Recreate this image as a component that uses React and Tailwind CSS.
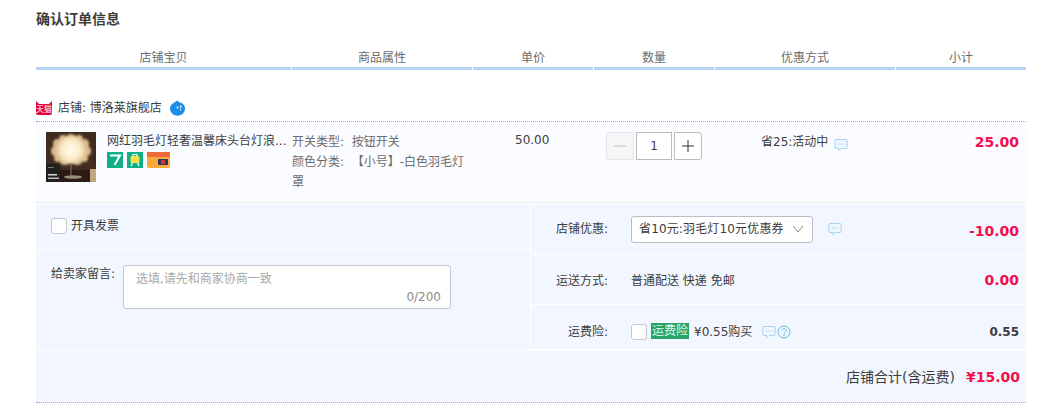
const COLS = [
  ["店铺宝贝", "w-[255px]"],
  ["商品属性", "w-[180px]"],
  ["单价", "w-[120px]"],
  ["数量", "w-[120px]"],
  ["优惠方式", "w-[180px]"],
  ["小计", "w-[130px]"],
];

function Bubble({ className = "" }) {
  return (
    <svg viewBox="0 0 14 14" className={`w-[14px] h-[14px] shrink-0 ${className}`} fill="none">
      <path d="M2 1.500h10a1.200 1.200 0 0 1 1.200 1.200v6.600a1.200 1.200 0 0 1-1.200 1.200H7l-2 2.200v-2.200H2a1.200 1.200 0 0 1-1.200-1.200V2.700a1.200 1.200 0 0 1 1.200-1.200z" stroke="#a9d3f0" strokeWidth="1" fill="#eef7fd" />
      <circle cx="4.500" cy="6" r=".6" fill="#8cc4ea" />
      <circle cx="7" cy="6" r=".6" fill="#8cc4ea" />
      <circle cx="9.500" cy="6" r=".6" fill="#8cc4ea" />
    </svg>
  );
}

function Check({ className = "" }) {
  return <span className={`block w-4 h-4 bg-white border border-[#c4c6cf] rounded-[3px] shrink-0 ${className}`} />;
}

const PETALS = [
  [25, 6, 5, 4], [17, 7, 4, 4], [33, 7, 4, 4], [11, 12, 4, 5], [39, 12, 4, 5],
  [9, 19, 4, 5], [41, 19, 4, 5], [12, 26, 4, 4], [38, 26, 4, 4], [19, 30, 5, 3], [31, 30, 5, 3],
];

function Thumb() {
  return (
    <svg viewBox="0 0 50 50" className="w-[50px] h-[50px] shrink-0">
      <defs>
        <radialGradient id="glow" cx="50%" cy="50%" r="50%">
          <stop offset="0%" stopColor="#fffdf0" />
          <stop offset="65%" stopColor="#fbeccb" />
          <stop offset="100%" stopColor="#e8cfa0" />
        </radialGradient>
        <filter id="soft" x="-20%" y="-20%" width="140%" height="140%">
          <feGaussianBlur stdDeviation="0.9" />
        </filter>
      </defs>
      <rect width="50" height="50" fill="#3f2b1f" />
      <rect x="0" y="38" width="50" height="12" fill="#2a1c14" />
      <rect x="44" y="37" width="6" height="13" fill="#c3a680" />
      <g filter="url(#soft)">
        {PETALS.map(([cx, cy, rx, ry]) => (
          <ellipse key={`${cx}-${cy}`} cx={cx} cy={cy} rx={rx} ry={ry} fill="#dcbd8e" />
        ))}
        <circle cx="25" cy="18" r="14" fill="url(#glow)" />
      </g>
      <rect x="24.500" y="31" width="1" height="13" fill="#8b7a66" />
      <ellipse cx="27" cy="45" rx="9" ry="1.800" fill="#9a8d7a" />
      <rect x="0" y="32" width="14" height="18" fill="#20201e" />
      <rect x="2" y="35" width="6" height="1" fill="#777" />
      <rect x="2" y="42" width="9" height="1.500" fill="#d8d8d8" />
      <rect x="2" y="45.500" width="11" height="1.500" fill="#bcbcbc" />
    </svg>
  );
}

function Row({ label, children, amount, dark, h, pad, amtPad }) {
  return (
    <div className={`flex items-center border-b border-white ${h} ${pad}`}>
      <div className="w-[77px] text-right text-[12px] text-[#3c3c3c] shrink-0">{label}</div>
      <div className="flex items-center ml-[23px] flex-1 min-w-0">{children}</div>
      <div className={`pr-[7px] font-bold ${amtPad} ${dark ? "text-[#3c3c3c] text-[12px]" : "text-[#f40f4b] text-[14px]"}`}>{amount}</div>
    </div>
  );
}

export default function App() {
  return (
    <div className="w-[1051px] h-[417px] overflow-hidden bg-white text-[12px] text-[#3c3c3c] font-['DejaVu_Sans','Noto_Sans_CJK_SC',sans-serif]">
      <div className="pl-[36px] w-[1026px]">
        <h1 className="pt-[10px] h-[48px] text-[14px] font-bold leading-[18px] text-[#3c3c3c]">确认订单信息</h1>

        <div className="flex gap-px w-[990px]">
          {COLS.map(([t, w]) => (
            <div key={t} className={`${w} shrink-0 text-center text-[12px] leading-[20px] text-[#6c6c6c] border-b-[3px] border-b-[#b2d1f3] h-[22px]`}>
              {t}
            </div>
          ))}
        </div>

        <div className="flex items-center h-[52px] pt-[25px] border-b border-dotted border-[#80b2d3]">
          <div className="w-[16px] h-[14px] mr-[6px] shrink-0 flex flex-col">
            <svg viewBox="0 0 16 3" className="w-[16px] h-[3px] block"><path d="M0 3V0l3 3h10l3-3v3z" fill="#e4003a" /></svg>
            <span className="w-[16px] h-[11px] bg-[#e4003a] rounded-b-[2px] text-white text-[8px] leading-[11px] text-center whitespace-nowrap overflow-hidden">天猫</span>
          </div>
          <span>店铺: 博洛莱旗舰店</span>
          <svg viewBox="0 0 18 18" className="w-[17px] h-[17px] ml-[7px] -mt-[1px]">
            <path d="M9 1.500C5 4 1 6 1 10.300A8 7.500 0 0 0 17 10.300c0-3.300-2.500-6-5.500-6.500C10.500 3.600 10 2.500 9 1.500z" fill="#1a8eeb" />
            <circle cx="9" cy="9" r="1" fill="#fff" />
            <circle cx="12.500" cy="8" r="1" fill="#fff" />
            <path d="M12.200 10v2" stroke="#fff" strokeWidth="1" />
          </svg>
        </div>

        <div className="flex gap-px bg-[#fbfcff] h-[80px] border-b border-dotted border-[#dcdcdc] box-content">
          <div className="w-[255px] flex pl-[10px] pt-[10px] shrink-0">
            <Thumb />
            <div className="ml-[11px] min-w-0 flex-1">
              <div className="whitespace-nowrap leading-[18px] text-[12px] text-[#3c3c3c]">网红羽毛灯轻奢温馨床头台灯浪...</div>
              <div className="flex gap-[4px] mt-[2px]">
                <svg viewBox="0 0 16 16" className="w-4 h-4"><rect width="16" height="16" fill="#0fb088" /><path d="M3 3.500h10L7.500 13" stroke="#fff" strokeWidth="2" fill="none" /></svg>
                <svg viewBox="0 0 16 16" className="w-4 h-4"><rect width="16" height="16" fill="#0fb088" /><rect x="3.500" y="4" width="9" height="7" rx="1.500" fill="#f6e04b" /><path d="M6 4V2.500h4V4M5.500 11L4 14M10.500 11L12 14" stroke="#fff" strokeWidth="1.200" fill="none" /></svg>
                <svg viewBox="0 0 23 16" className="w-[23px] h-4"><rect width="23" height="16" rx="2" fill="#fba93a" /><rect width="23" height="5" fill="#ef6a3a" /><rect x="11" y="7" width="10" height="6" rx="1" fill="#27365f" /><rect x="14" y="8" width="4" height="4" fill="#d9323f" /></svg>
              </div>
            </div>
          </div>
          <div className="w-[180px] shrink-0 pt-[10px] text-[#6c6c6c] leading-[20px]">
            <div className="whitespace-nowrap">开关类型:&nbsp; 按钮开关</div>
            <div className="w-[176px]">颜色分类:&nbsp; 【小号】-白色羽毛灯罩</div>
          </div>
          <div className="w-[120px] shrink-0 pt-[9px] pl-[42px] leading-[18px] text-[#3c3c3c]">50.00</div>
          <div className="w-[120px] shrink-0 pt-[10px] pl-[12px]">
            <div className="flex gap-[2px]">
              <button className="w-[28px] h-[28px] bg-[#f5f6f8] border border-[#e3e4e8] rounded-l-[3px] flex items-center justify-center">
                <svg viewBox="0 0 12 12" className="w-3 h-3"><path d="M0 6h12" stroke="#c2c2c2" /></svg>
              </button>
              <div className="w-[36px] h-[28px] bg-white border border-[#bcbcbc] flex items-center justify-center text-[12px]">1</div>
              <button className="w-[28px] h-[28px] bg-white border border-[#bcbcbc] rounded-r-[3px] flex items-center justify-center">
                <svg viewBox="0 0 12 12" className="w-3 h-3"><path d="M0 6h12M6 0v12" stroke="#333" /></svg>
              </button>
            </div>
          </div>
          <div className="w-[180px] shrink-0 pt-[11px] pl-[46px] flex items-start">
            <span className="leading-[18px]">省25:活动中</span>
            <Bubble className="ml-[6px] mt-[5px]" />
          </div>
          <div className="flex-1 pt-[10px] pr-[7px] text-right font-bold text-[14px] leading-[20px] text-[#f40f4b]">25.00</div>
        </div>

        <div className="mt-px bg-[#f2f7ff] border-b border-dotted border-[#80b2d3] w-[990px]">
          <div className="flex h-[146px] border-b border-white box-content">
            <div className="w-[495px] shrink-0 border-r border-white">
              <div className="h-[46px] border-b border-white flex items-center pl-[15px] pb-[2px]">
                <Check />
                <span className="ml-[4px] leading-[18px]">开具发票</span>
              </div>
              <div className="flex pl-[15px] pt-[15px]">
                <span className="w-[72px] shrink-0 leading-[18px]">给卖家留言:</span>
                <div className="relative w-[328px] h-[44px] bg-white border border-[#c6c7cc] rounded-[3px] pl-[12px] pt-[4px] text-[#a9a9a9] leading-[18px]">
                  选填,请先和商家协商一致
                  <span className="absolute right-[9px] bottom-[2px] text-[#8c8c8c]">0/200</span>
                </div>
              </div>
            </div>
            <div className="flex-1 min-w-0">
              <Row label="店铺优惠:" amount="-10.00" h="h-[51px]" amtPad="pt-[5px]">
                <div className="w-[182px] h-[27px] bg-white border border-[#bcbcc4] rounded-[3px] flex items-center pl-[7px] pr-[8px] justify-between shrink-0">
                  <span className="whitespace-nowrap tracking-[0.15px]">省10元:羽毛灯10元优惠券</span>
                  <svg viewBox="0 0 12 8" className="w-[12px] h-[8px]"><path d="M1 1l5 6 5-6" stroke="#888" fill="none" /></svg>
                </div>
                <Bubble className="ml-[15px]" />
              </Row>
              <Row label="运送方式:" amount="0.00" h="h-[50px]" pad="pt-[2px]">
                <span className="whitespace-nowrap">普通配送 快递 免邮</span>
              </Row>
              <Row label="运费险:" amount="0.55" dark h="h-[45px]" pad="pt-[9px]">
                <Check />
                <span className="ml-[4px] w-[38px] h-[16px] bg-[#27a567] text-[#dff5e8] text-center leading-[16px] whitespace-nowrap -mt-[2px]">运费险</span>
                <span className="ml-[5px] whitespace-nowrap">¥0.55购买</span>
                <Bubble className="ml-[10px]" />
                <svg viewBox="0 0 14 14" className="w-[14px] h-[14px] ml-px">
                  <circle cx="7" cy="7" r="6" fill="#eef7fd" stroke="#6fb5e8" />
                  <path d="M5 5.500a2 2 0 1 1 3 1.800c-.7.400-1 .8-1 1.700" stroke="#6fb5e8" fill="none" />
                  <circle cx="7" cy="10.500" r=".7" fill="#6fb5e8" />
                </svg>
              </Row>
            </div>
          </div>
          <div className="h-[51px] flex items-center justify-end pr-[6px] text-[14px] pt-[1px]">
            <span className="text-[#3c3c3c]">店铺合计(含运费)</span>
            <span className="ml-[11px] font-bold text-[14px] text-[#f40f4b]">¥15.00</span>
          </div>
        </div>
      </div>
    </div>
  );
}
